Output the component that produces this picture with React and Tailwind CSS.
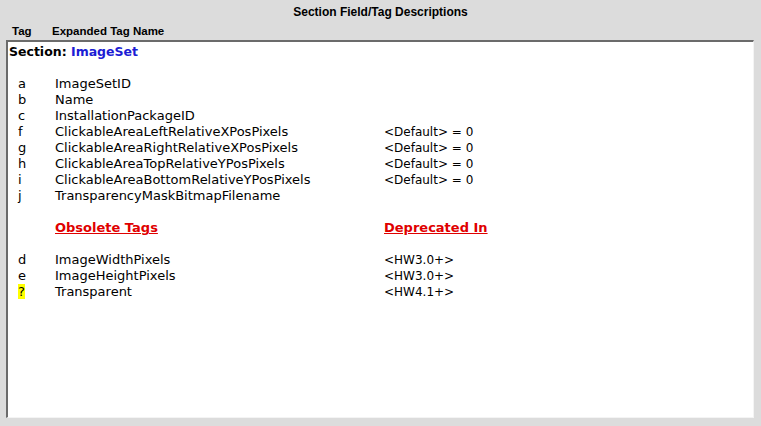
import React from "react";

const fields = [
    { tag: "a", name: "ImageSetID" },
    { tag: "b", name: "Name" },
    { tag: "c", name: "InstallationPackageID" },
    { tag: "f", name: "ClickableAreaLeftRelativeXPosPixels", value: "<Default> = 0" },
    { tag: "g", name: "ClickableAreaRightRelativeXPosPixels", value: "<Default> = 0" },
    { tag: "h", name: "ClickableAreaTopRelativeYPosPixels", value: "<Default> = 0" },
    { tag: "i", name: "ClickableAreaBottomRelativeYPosPixels", value: "<Default> = 0" },
    { tag: "j", name: "TransparencyMaskBitmapFilename" },
];

// Tags that are no longer used
const obsolete = [
    { tag: "d", name: "ImageWidthPixels", value: "<HW3.0+>" },
    { tag: "e", name: "ImageHeightPixels", value: "<HW3.0+>" },
    { tag: "?", name: "Transparent", value: "<HW4.1+>", unknown: true },
];

const Row = ({ tag, name, value, unknown }) => (
    <div className="flex h-[16px] items-center leading-[16px]">
        <span className="w-[47px] pl-[10px]">
            {unknown ? <span className="bg-[#ffff00]">{tag}</span> : tag}
        </span>
        <span className="w-[329px]">{name}</span>
        <span className="text-[12px]">{value}</span>
    </div>
);

const App = () => {
    return (
        <div className="flex h-[426px] w-[761px] flex-col bg-[#dcdcdc] font-['DejaVu_Sans',sans-serif] text-black">
            <div className="flex h-[23px] items-center justify-center font-['Liberation_Sans',sans-serif] text-[12px] font-bold">
                Section Field/Tag Descriptions
            </div>
            <div className="flex h-[17px] items-center font-['Liberation_Sans',sans-serif] text-[11.5px] font-bold">
                <span className="w-[52px] pl-[12px]">Tag</span>
                <span>Expanded Tag Name</span>
            </div>
            <div className="ml-[6px] mr-[7px] h-[378px] border-t-2 border-l-2 border-r border-b border-t-[#6b6b6b] border-l-[#6b6b6b] border-r-[#f4f4f4] border-b-[#f4f4f4] bg-white text-[13px]">
                <div className="flex h-[20px] items-center pl-[1px] text-[12.5px] font-bold">
                    Section:&nbsp;<span className="text-[#1c1cd4]">ImageSet</span>
                </div>
                <div className="h-[14px]" />
                {fields.map((f) => (
                    <Row key={f.tag} {...f} />
                ))}
                <div className="h-[16px]" />
                <div className="flex h-[16px] items-center text-[13px] font-bold text-[#e00000]">
                    <span className="w-[47px]" />
                    <span className="w-[329px] underline">Obsolete Tags</span>
                    <span className="underline">Deprecated In</span>
                </div>
                <div className="h-[16px]" />
                {obsolete.map((f) => (
                    <Row key={f.tag} {...f} />
                ))}
            </div>
        </div>
    );
};

export default App;
